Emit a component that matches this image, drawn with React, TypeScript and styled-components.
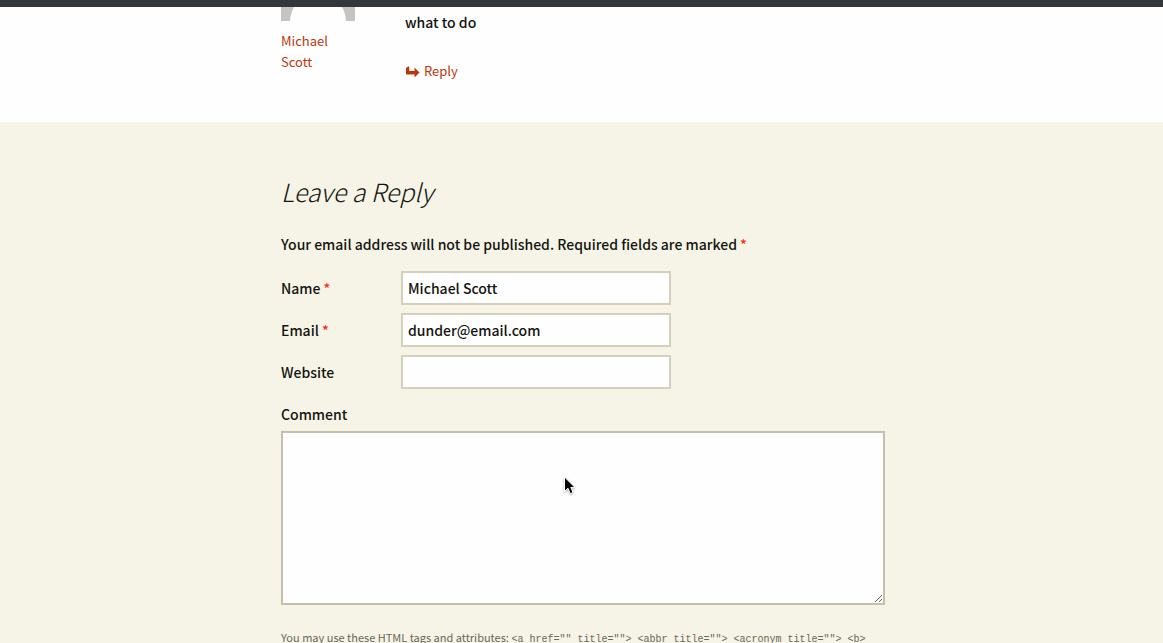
import React from "react";
import styled, { createGlobalStyle } from "styled-components";

const GlobalStyle = createGlobalStyle`
  *, *::before, *::after { box-sizing: border-box; }
  body {
    margin: 0;
    background: #f6f4e6;
    color: #141412;
    font-family: "Noto Sans CJK SC", "Noto Sans", sans-serif;
    font-size: 14px;
    font-weight: 500;
    line-height: 24px;
  }
`;

const Page = styled.main`
  height: 100vh;
  overflow: hidden;
`;

const TopBar = styled.div`
  height: 7px;
  background: #32373b;
`;

const Column = styled.div`
  max-width: 607px;
  margin: 0 auto;
  padding-left: 3px;
`;

const CommentSection = styled.section`
  background: #fefefe;
  padding-bottom: 38px;
`;

const CommentRow = styled(Column).attrs({ as: "article" })`
  display: grid;
  grid-template-columns: 74px 1fr;
  column-gap: 50px;
`;

const Author = styled.div`
  display: flex;
  flex-direction: column;
  gap: 9px;
`;

const Avatar = styled.svg`
  display: block;
  width: 74px;
  height: 14px;
`;

const AuthorLink = styled.a`
  color: #bc360a;
  font-size: 13px;
  font-weight: 400;
  line-height: 21px;
  text-decoration: none;
`;

const CommentText = styled.p`
  margin: 3px 0 26px;
`;

const ReplyLink = styled.a`
  display: inline-flex;
  align-items: center;
  gap: 4px;
  color: #bc360a;
  font-size: 13px;
  font-weight: 400;
  line-height: 22px;
  text-decoration: none;
`;

const ReplyIcon = styled.svg`
  display: block;
  width: 15px;
  height: 14px;
`;

const RespondSection = styled.section`
  padding-top: 46px;
`;

const Heading = styled.h3`
  margin: 0 0 18px;
  font-size: 25px;
  font-style: italic;
  font-weight: 300;
  line-height: 46px;
`;

const Notes = styled.p`
  margin: 0 0 15px;
`;

const Mark = styled.span`
  color: #fa2c19;
`;

const Form = styled.form`
  display: flex;
  flex-direction: column;
  gap: 8px;
`;

const Field = styled.div`
  display: grid;
  grid-template-columns: 120px 270px;
  align-items: center;
`;

const TextInput = styled.input`
  width: 100%;
  height: 34px;
  padding: 3px 5px 4px;
  border: 2px solid #d4d0ba;
  border-radius: 0;
  background: #fefefe;
  color: #141412;
  font: inherit;
  outline: none;
`;

const CommentField = styled.div`
  display: flex;
  flex-direction: column;
  gap: 5px;
  padding-top: 5px;
`;

const CommentArea = styled.div`
  position: relative;
  display: flex;
`;

const TextArea = styled.textarea`
  width: 100%;
  height: 174px;
  padding: 5px;
  border: 2px solid #c3bfab;
  border-radius: 0;
  background: #fefefe;
  color: #141412;
  font: inherit;
  outline: none;
  resize: vertical;
`;

const Pointer = styled.svg`
  position: absolute;
  left: 282px;
  top: 45px;
  width: 14px;
  height: 20px;
  pointer-events: none;
  filter: drop-shadow(0 1px 1px rgba(0, 0, 0, 0.3));
`;

const AllowedTags = styled.p`
  margin: 15px 0 0;
  color: #686758;
  font-size: 11px;
  font-weight: 400;
  line-height: 18px;
`;

const Code = styled.code`
  font-family: "Liberation Mono", monospace;
  font-size: 10px;
`;

type FieldProps = {
  id: string;
  label: string;
  type: string;
  value?: string;
  required?: boolean;
};

function FormField({ id, label, type, value, required }: FieldProps) {
  return (
    <Field>
      <label htmlFor={id}>
        {label} {required && <Mark>*</Mark>}
      </label>
      <TextInput id={id} type={type} defaultValue={value} required={required} />
    </Field>
  );
}

export default function App() {
  return (
    <>
      <GlobalStyle />
      <Page>
        <TopBar />
        <CommentSection>
          <CommentRow>
            <Author>
              <Avatar viewBox="0 0 74 14" aria-hidden="true">
                <path fill="#c4c4c4" d="M0 0H13Q9.500 6 9 14H0Z M61 0H74V14H65Q64.500 6 61 0Z" />
              </Avatar>
              <AuthorLink href="#author">Michael Scott</AuthorLink>
            </Author>
            <div>
              <CommentText>what to do</CommentText>
              <ReplyLink href="#respond">
                <ReplyIcon viewBox="0 0 15 14" aria-hidden="true">
                  <path fill="#bc360a" d="M1 4L3.500 2.200L4.200 3V7H9.500V3.500L14.500 8.500L9.500 13.500V10.500H1.500L1 10Z" />
                </ReplyIcon>
                Reply
              </ReplyLink>
            </div>
          </CommentRow>
        </CommentSection>
        <RespondSection id="respond">
          <Column>
            <Heading>Leave a Reply</Heading>
            <Notes>
              Your email address will not be published. Required fields are marked <Mark>*</Mark>
            </Notes>
            <Form>
              <FormField id="name" label="Name" type="text" value="Michael Scott" required />
              <FormField id="email" label="Email" type="email" value="dunder@email.com" required />
              <FormField id="website" label="Website" type="url" />
              <CommentField>
                <label htmlFor="comment">Comment</label>
                <CommentArea>
                  <TextArea id="comment" />
                  <Pointer viewBox="0 0 14 20" aria-hidden="true">
                    <path
                      d="M1.500 1V15.500L5 12.300L7.300 17.700L10 16.500L7.800 11.400H12Z"
                      fill="#000"
                      stroke="#fff"
                      strokeWidth="1"
                    />
                  </Pointer>
                </CommentArea>
              </CommentField>
              <AllowedTags>
                You may use these HTML tags and attributes:{" "}
                <Code>
                  {'<a href="" title=""> <abbr title=""> <acronym title=""> <b>'}
                </Code>
              </AllowedTags>
            </Form>
          </Column>
        </RespondSection>
      </Page>
    </>
  );
}
